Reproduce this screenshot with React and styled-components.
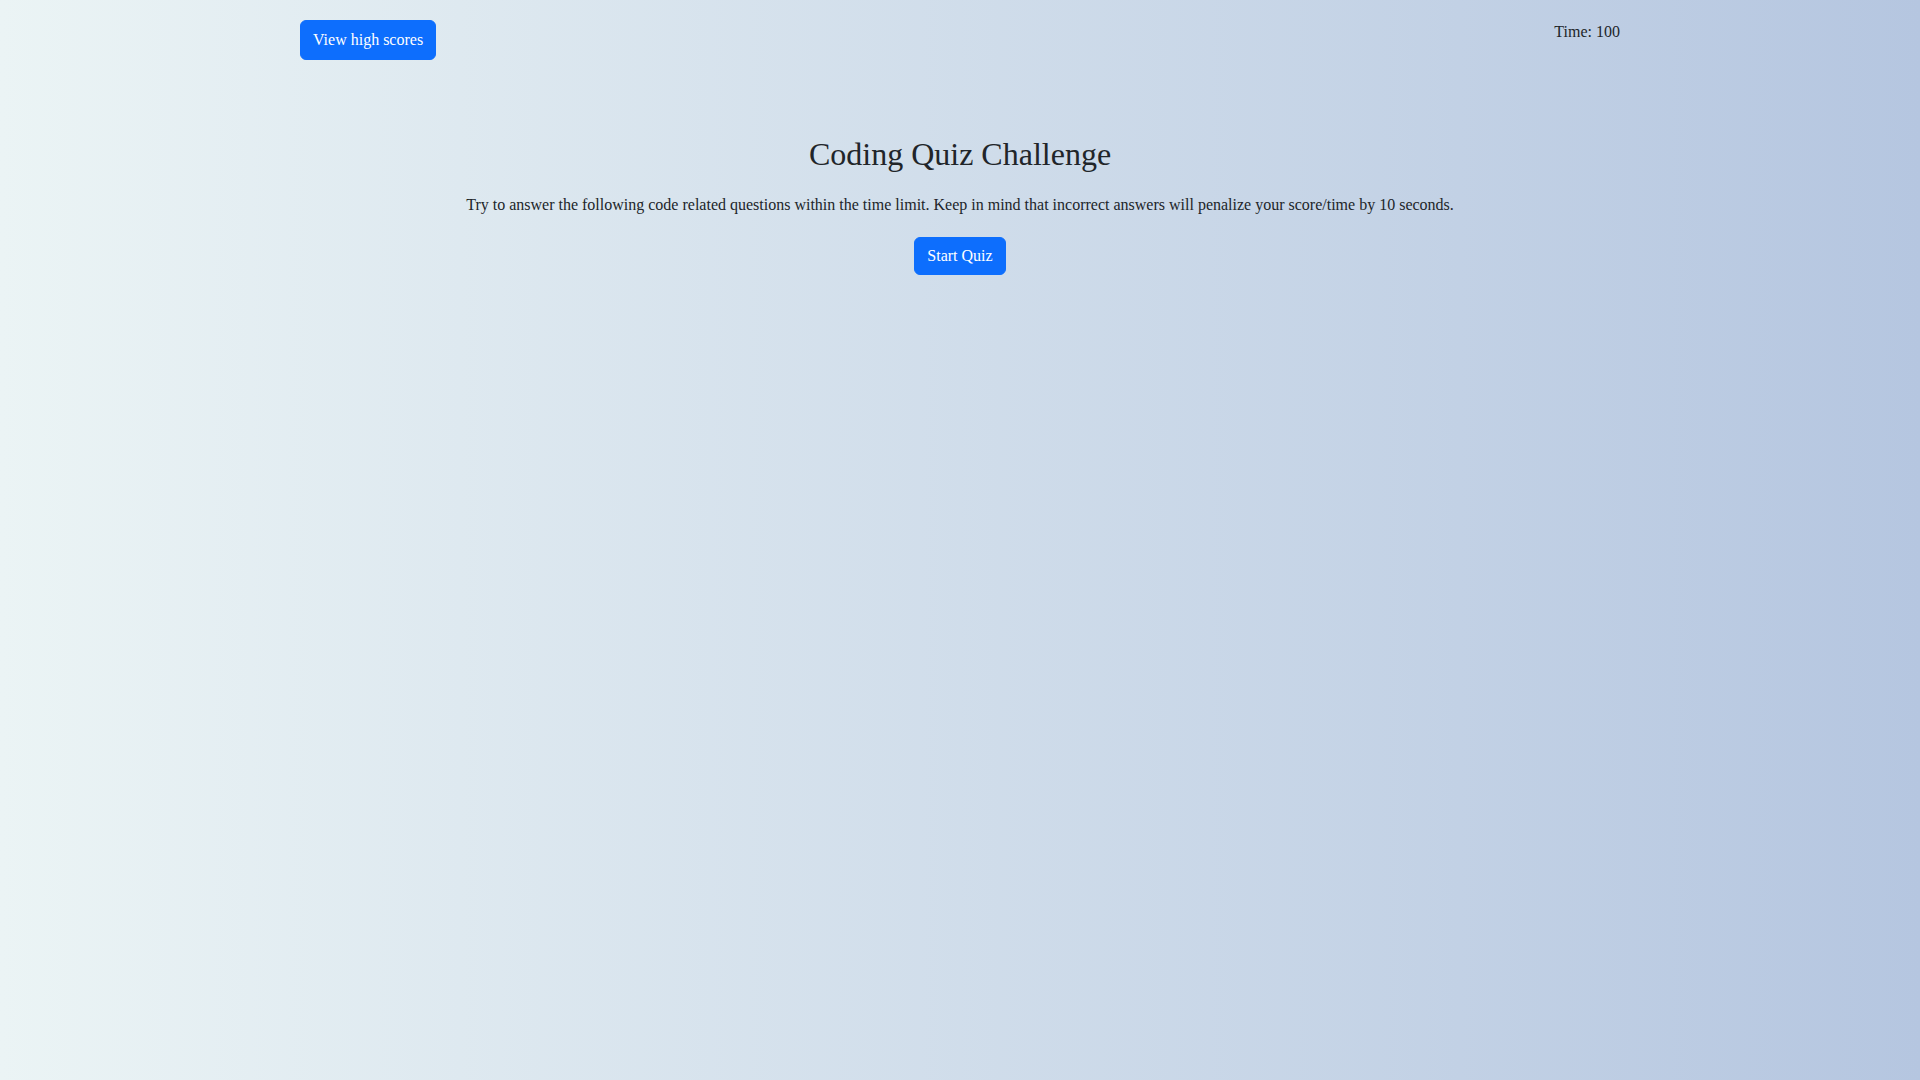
import React from "react";
import styled, { createGlobalStyle } from "styled-components";

const Global = createGlobalStyle`
  html, body { margin: 0; padding: 0; }
  body {
    min-height: 100vh;
    font-family: "Liberation Serif", "Times New Roman", serif;
    font-size: 16px;
    line-height: 1.5;
    color: #212529;
    background: linear-gradient(90deg, #ebf4f5 0%, #b5c6e0 100%);
  }
  #root { min-height: 100vh; }
`;

const Container = styled.div`
  width: 1320px;
  margin: 0 auto;
`;

const Header = styled.header`
  display: flex;
  justify-content: space-between;
  align-items: flex-start;
  padding-top: 20px;
`;

const Button = styled.button`
  font-family: "Liberation Serif", "Times New Roman", serif;
  font-size: 16px;
  line-height: 24px;
  color: #fff;
  background: #0d6efd;
  border: 1px solid #0d6efd;
  border-radius: 6px;
  padding: ${(p) => (p.$tall ? "7px 12px" : "6px 12px")};
  cursor: pointer;
`;

const Timer = styled.div`
  font-size: 16px;
  line-height: 24px;
`;

const Intro = styled.main`
  display: flex;
  flex-direction: column;
  align-items: center;
  text-align: center;
  padding-top: 75px;
`;

const Title = styled.h2`
  margin: 0;
  font-size: 32px;
  font-weight: 400;
  line-height: 1.2;
`;

const Lead = styled.p`
  margin: 20px 0 20px;
  font-size: 16px;
  line-height: 24px;
`;

export default function App() {
  return (
    <>
      <Global />
      <Container>
        <Header>
          <Button $tall>View high scores</Button>
          <Timer>Time: 100</Timer>
        </Header>
        <Intro>
          <Title>Coding Quiz Challenge</Title>
          <Lead>
            Try to answer the following code related questions within the time limit. Keep in mind that incorrect answers will penalize your score/time by 10 seconds.
          </Lead>
          <Button>Start Quiz</Button>
        </Intro>
      </Container>
    </>
  );
}
